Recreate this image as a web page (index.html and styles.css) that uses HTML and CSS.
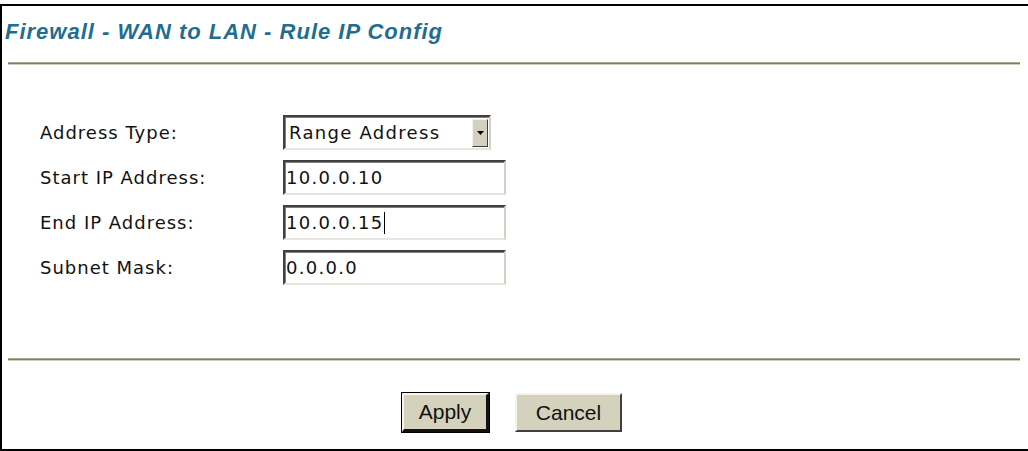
FILE: index.html
```html
<!DOCTYPE html>
<html>
<head>
<meta charset="utf-8">
<title>Firewall - WAN to LAN - Rule IP Config</title>
<link rel="stylesheet" href="styles.css">
</head>
<body>
<div class="frame">
  <div class="title">Firewall - WAN to LAN - Rule IP Config</div>
  <div class="rule rule-top"></div>
  <div class="form">
    <div class="row">
      <span class="label">Address Type:</span>
      <div class="select">
        <span class="select-text">Range Address</span>
        <span class="select-btn"><svg width="7" height="4" viewBox="0 0 7 4"><path d="M0 0H7L3.5 4Z" fill="#000"/></svg></span>
      </div>
    </div>
    <div class="row">
      <span class="label">Start IP Address:</span>
      <div class="field">10.0.0.10</div>
    </div>
    <div class="row">
      <span class="label">End IP Address:</span>
      <div class="field">10.0.0.15<span class="caret"></span></div>
    </div>
    <div class="row">
      <span class="label">Subnet Mask:</span>
      <div class="field">0.0.0.0</div>
    </div>
  </div>
  <div class="rule rule-bottom"></div>
  <div class="buttons">
    <button class="btn btn-default">Apply</button>
    <button class="btn btn-cancel">Cancel</button>
  </div>
</div>
</body>
</html>
```
FILE: styles.css
```css
html, body {
  margin: 0;
  padding: 0;
  background: #fff;
}
body {
  font-family: "DejaVu Sans", "Liberation Sans", sans-serif;
  color: #111;
}
.frame {
  box-sizing: border-box;
  margin-top: 4px;
  height: 447px;
  border-top: 2px solid #000;
  border-left: 2px solid #000;
  border-bottom: 2px solid #000;
  display: flex;
  flex-direction: column;
}
.title {
  padding: 13px 0 0 3px;
  height: 26px;
  line-height: 26px;
  font-family: "Liberation Sans", Arial, sans-serif;
  font-size: 22px;
  font-weight: bold;
  font-style: italic;
  letter-spacing: 1px;
  color: #1f6d90;
}
.rule {
  height: 1px;
  background: #7e7e66;
  border-top: 1px solid #a9a991;
  border-bottom: 1px solid #cfcfc0;
  margin: 0 8px 0 6px;
}
.rule-top { margin-top: 17px; }
.rule-bottom { margin-top: 68px; }
.form {
  margin-top: 45px;
  display: flex;
  flex-direction: column;
}
.row {
  height: 45px;
  display: flex;
  align-items: center;
}
.label {
  box-sizing: border-box;
  width: 281px;
  padding-left: 38px;
  font-size: 18px;
  letter-spacing: 1px;
}
.select, .field {
  box-sizing: border-box;
  height: 35px;
  border-top: 2px solid #404040;
  border-left: 2px solid #404040;
  border-right: 2px solid #d4d0c8;
  border-bottom: 2px solid #e8e6dc;
  box-shadow: inset 1px 1px 0 #808080;
  background: #fff;
  font-size: 18px;
  letter-spacing: 1.3px;
  color: #111;
  display: flex;
  align-items: center;
}
.select {
  width: 208px;
  padding-left: 4px;
  justify-content: space-between;
}
.select-btn {
  width: 16px;
  height: 28px;
  margin-right: 1px;
  background: #d4d0c0;
  border-top: 1px solid #f4f2ea;
  border-left: 1px solid #f4f2ea;
  border-right: 1px solid #404040;
  border-bottom: 1px solid #404040;
  box-sizing: border-box;
  display: flex;
  align-items: center;
  justify-content: center;
}
.field {
  width: 223px;
  padding-left: 1px;
}
.caret {
  display: inline-block;
  width: 1px;
  height: 22px;
  background: #000;
}
.buttons {
  margin-top: 32px;
  display: flex;
  justify-content: center;
  gap: 26px;
  padding-right: 6px;
}
.btn {
  box-sizing: border-box;
  height: 39px;
  font-family: "Liberation Sans", Arial, sans-serif;
  font-size: 21px;
  color: #111;
  background: #d4d1bc;
  border-top: 2px solid #f6f4ea;
  border-left: 2px solid #f6f4ea;
  border-right: 2px solid #404040;
  border-bottom: 2px solid #404040;
  padding: 0;
}
.btn-default {
  width: 87px;
  outline: 1px solid #000;
  border-right-width: 3px;
  border-bottom-width: 3px;
  border-right-color: #111;
  border-bottom-color: #111;
}
.btn-cancel {
  width: 107px;
}
```
